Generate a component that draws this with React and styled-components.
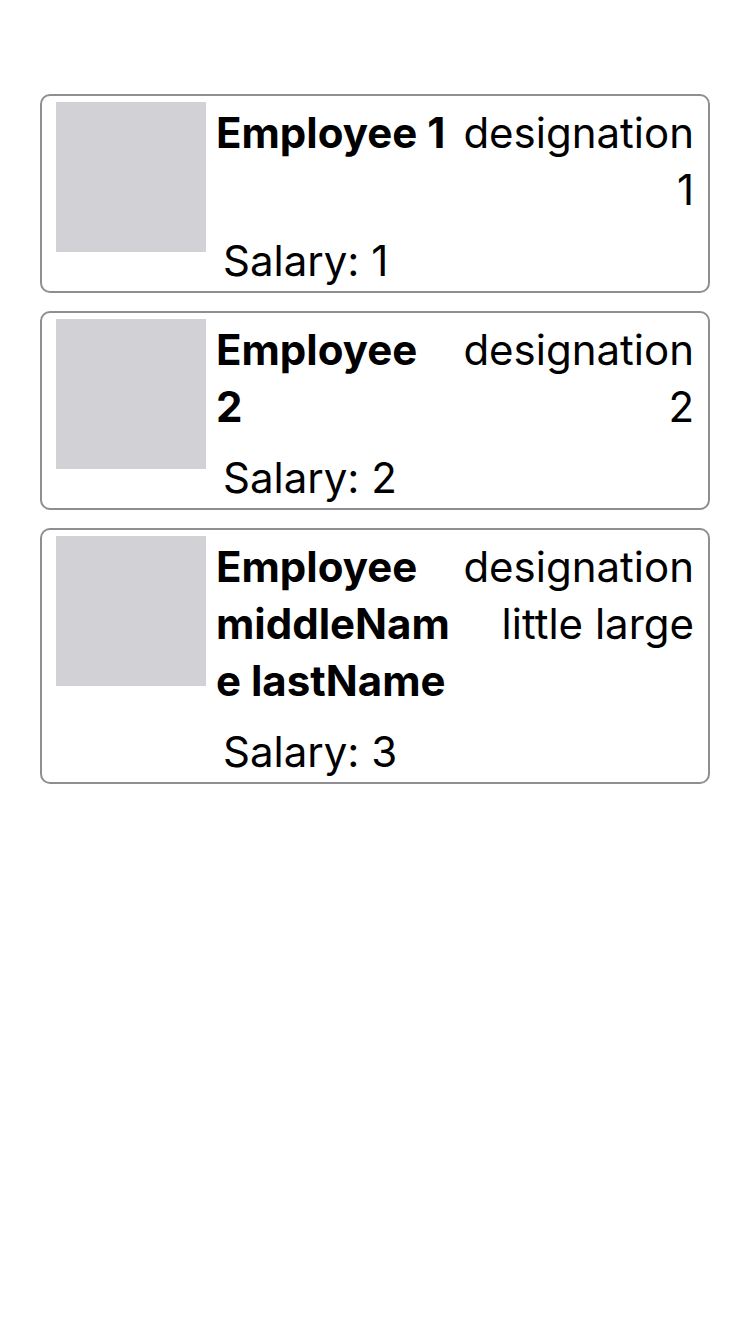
import React from 'react';
import styled, { createGlobalStyle } from 'styled-components';

const employees = [
  { id: 1, name: 'Employee 1', designation: 'designation 1', salary: 1 },
  { id: 2, name: 'Employee 2', designation: 'designation 2', salary: 2 },
  {
    id: 3,
    name: 'Employee middleName lastName',
    designation: 'designation little large',
    salary: 3,
  },
];

const FONT = '"Inter", "Liberation Sans", Arial, sans-serif';

const GlobalStyle = createGlobalStyle`
  body {
    margin: 0;
    background: #fff;
    font-family: ${FONT};
    color: #000;
  }
`;

const Page = styled.div`
  display: flex;
  flex-direction: column;
  gap: 18px;
  padding: 94px 40px 0;
`;

const Card = styled.div`
  display: flex;
  border: 2px solid #8e8e93;
  border-radius: 10px;
  padding: 6px 14px 2px;
`;

const Photo = styled.div`
  width: 150px;
  height: 150px;
  flex-shrink: 0;
  background: #d1d1d6;
`;

const Info = styled.div`
  flex: 1;
  min-width: 0;
  margin-left: 10px;
  padding-top: 2px;
`;

const Row = styled.div`
  display: flex;
  gap: 6px;
`;

const Name = styled.div`
  flex: 1;
  min-width: 0;
  font-size: 42px;
  line-height: 57px;
  font-weight: 700;
  overflow-wrap: anywhere;
`;

const Designation = styled.div`
  flex: 1;
  min-width: 0;
  font-size: 42px;
  line-height: 57px;
  text-align: right;
  overflow-wrap: anywhere;
`;

const Salary = styled.div`
  margin-top: 14px;
  padding-left: 7px;
  font-size: 42px;
  line-height: 57px;
`;

function EmployeeCard({ employee }) {
  return (
    <Card>
      <Photo />
      <Info>
        <Row>
          <Name>{employee.name}</Name>
          <Designation>{employee.designation}</Designation>
        </Row>
        <Salary>Salary: {employee.salary}</Salary>
      </Info>
    </Card>
  );
}

export default function App() {
  return (
    <>
      <GlobalStyle />
      <Page>
        {employees.map((e) => (
          <EmployeeCard key={e.id} employee={e} />
        ))}
      </Page>
    </>
  );
}
